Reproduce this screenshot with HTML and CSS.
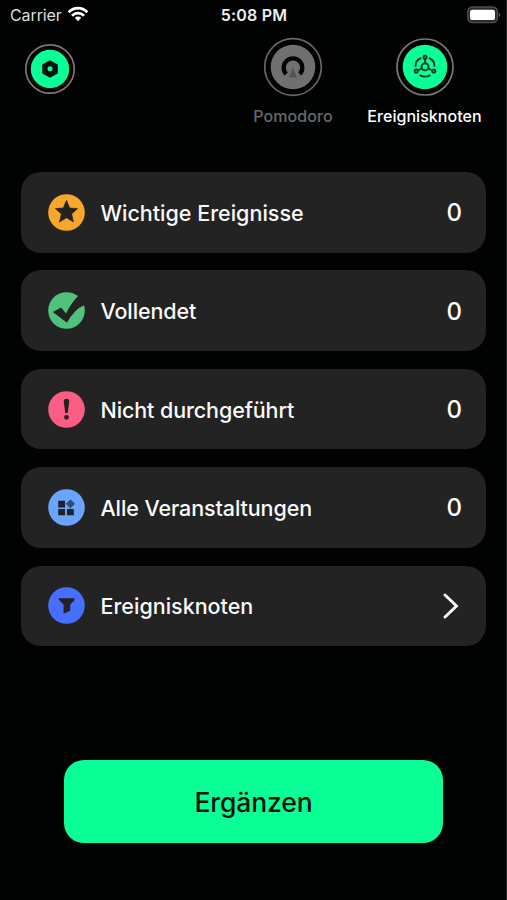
FILE: index.html
```html
<!DOCTYPE html>
<html lang="de">
<head>
<meta charset="utf-8">
<title>Ereignisknoten</title>
<link rel="stylesheet" href="styles.css">
</head>
<body>
<div class="screen">
  <div class="status">
    <div class="carrier"><span>Carrier</span>
      <svg width="22" height="16" viewBox="0 0 22 16" fill="none" stroke="#fff" stroke-width="2.7"><path d="M1.7 6.2C7 .8 15 .8 20.3 6.2"/><path d="M5 9.7c3.3-3.4 8.7-3.4 12 0"/><path d="M7.8 11.8 11 15.2l3.200-3.400c-1.800-1.800-4.600-1.800-6.400 0z" fill="#fff" stroke="none"/></svg>
    </div>
    <div class="clock">5:08 PM</div>
    <svg class="battery" width="34" height="18" viewBox="0 0 34 18"><rect x=".8" y="1" width="29.600" height="15.600" rx="4.500" fill="#2a2a2a" stroke="#505050" stroke-width="1.400"/><rect x="3" y="3.700" width="25" height="10.400" rx="2.200" fill="#fff"/><path d="M31.800 6.500c2 .8 2 3.800 0 4.600z" fill="#555"/></svg>
  </div>
  <div class="header">
    <svg class="settings" width="52" height="52" viewBox="-26 -26 52 52"><circle r="24.200" fill="none" stroke="#777" stroke-width="1.700"/><circle r="19.200" fill="#0aff97"/><path d="M0-8.800 7.800-4.400V4.400L0 8.800-7.800 4.400V-4.400z" fill="#04130c"/><circle r="2.500" cy="-.3" fill="#0aff97"/></svg>
    <div class="tab tab-off">
      <svg width="60" height="60" viewBox="-30 -30 60 60"><circle r="28.300" fill="none" stroke="#666" stroke-width="1.700"/><circle r="22.300" fill="#707070"/><path d="M-6.800 7A9.300 9.300 0 1 1 6.800 7" fill="none" stroke="#040404" stroke-width="4.300"/><path d="M0 .5 4 10.500H-4z" fill="#555"/></svg>
      <span>Pomodoro</span>
    </div>
    <div class="tab tab-on">
      <svg width="60" height="60" viewBox="-30 -30 60 60"><circle r="28" fill="none" stroke="#777" stroke-width="1.700"/><circle r="22.300" fill="#0aff97"/><g fill="none" stroke="#063c27" stroke-width="1.900"><circle r="3.500" cy="-.2"/><circle cy="-9.800" r="1.600"/><circle cx="-8.800" cy="4" r="1.600"/><circle cx="8.800" cy="4" r="1.600"/><path d="M0-8.200V-3.700M-3 1.500-7.400 3.400M3 1.500 7.400 3.400M-9.600-.2C-9.700-4.500-7.400-7.700-3.800-9M9.600-.2C9.700-4.500 7.400-7.700 3.800-9M-5.400 8.100Q0 11.200 5.400 8.100"/></g></svg>
      <span>Ereignisknoten</span>
    </div>
  </div>
  <div class="list">
    <div class="card">
      <svg class="icon" viewBox="0 0 38 38"><circle cx="19" cy="19" r="18.800" fill="#f8a72b"/><path d="M19 6.500 22.300 14.300 30.500 15 24.300 20.500 26.200 28.800 19 24.500 11.800 28.800 13.700 20.500 7.500 15 15.700 14.300z" fill="#222" stroke="#222" stroke-width=".6"/></svg>
      <span class="label wide">Wichtige Ereignisse</span><span class="count">0</span>
    </div>
    <div class="card">
      <svg class="icon" viewBox="0 0 38 38"><circle cx="19" cy="19" r="18.800" fill="#50c27b"/><path d="M5 20.500 13.500 16 18.500 22Q24 10.500 31.500 3.500L38 9V13Q27 17.500 19.500 31.500z" fill="#222"/></svg>
      <span class="label">Vollendet</span><span class="count">0</span>
    </div>
    <div class="card">
      <svg class="icon" viewBox="0 0 38 38"><circle cx="19" cy="19" r="18.800" fill="#fb5d84"/><path d="M16.200 10.800a2.800 2.800 0 0 1 5.600 0L20.300 22.500h-2.600z" fill="#222"/><circle cx="19" cy="27" r="2.400" fill="#222"/></svg>
      <span class="label">Nicht durchgeführt</span><span class="count">0</span>
    </div>
    <div class="card">
      <svg class="icon" viewBox="0 0 38 38"><circle cx="19" cy="19" r="18.800" fill="#6aa4fd"/><path d="M10.500 12h7v7h-7zM10.500 20.500h7v6.500h-7zM19.500 20.500h7v6.500h-7z" fill="#202227"/><path d="m23 10.500 4.700 4.700L23 19.900l-4.700-4.700z" fill="#2f4d7b"/></svg>
      <span class="label">Alle Veranstaltungen</span><span class="count">0</span>
    </div>
    <div class="card">
      <svg class="icon" viewBox="0 0 38 38"><circle cx="19" cy="19" r="18.800" fill="#466fff"/><path d="M11 11.500H27.500L26.800 14 22.800 18V24.500L16 27.500V18L11 13z" fill="#222"/></svg>
      <span class="label wide">Ereignisknoten</span>
      <svg class="chevron" width="18" height="28" viewBox="0 0 18 28"><path d="M3 3 14.500 14 3 25" fill="none" stroke="#fff" stroke-width="2.900" stroke-linecap="round"/></svg>
    </div>
  </div>
  <button class="add">Ergänzen</button>
</div>
</body>
</html>
```
FILE: styles.css
```css
* { box-sizing: border-box; }
body { margin: 0; background: #010302; color: #fff; font-family: Inter, "Liberation Sans", sans-serif; }
.screen { width: 507px; height: 900px; border-right: 1px solid #242625; display: flex; flex-direction: column; overflow: hidden; }
svg { display: block; flex: none; }
.status { height: 30px; display: grid; grid-template-columns: 1fr auto 1fr; align-items: center; padding: 0 5px 0 10px; }
.carrier { display: flex; align-items: center; gap: 5px; font-size: 16px; letter-spacing: -.1px; color: #ddd; }
.carrier svg { margin-top: -3px; }
.clock { font-size: 16px; font-weight: 600; letter-spacing: .2px; color: #eee; margin-right: 3px; }
.battery { justify-self: end; margin-top: -1px; }
.header { height: 142px; display: flex; padding: 7px 15px 0 24px; align-items: flex-start; }
.settings { margin: 6px auto 0 0; }
.tab { display: flex; flex-direction: column; align-items: center; gap: 9px; font-size: 16px; line-height: 20px; font-weight: 500; }
.tab span { white-space: nowrap; }
.tab-off { color: #686868; width: 98px; }
.tab-on { width: 132px; margin-left: 17px; }
.tab-off span { letter-spacing: .1px; }
.tab-on span { letter-spacing: .05px; margin-left: -1px; }
.list { display: flex; flex-direction: column; gap: 17.700px; padding: 0 20px 0 21.400px; }
.card { height: 80.700px; border-radius: 20px; background: #232323; display: flex; align-items: center; padding: 0 24px 0 26.200px; }
.icon { width: 37px; height: 37px; margin-right: 15.900px; }
.label { flex: 1; margin-top: 1px; font-size: 21.500px; font-weight: 500; line-height: 28px; letter-spacing: -.1px; white-space: nowrap; color: #fafafa; }
.wide { letter-spacing: 0; }
.count { margin-top: 1px; font-size: 24px; font-weight: 500; }
.chevron { margin: 0 2.500px 0 0; }
.add { width: 379px; height: 83px; margin: 114px 0 0 64px; border: 0; padding: 0; border-radius: 20px; background: #0aff97; color: #04140c; font: 500 26.500px Inter, "Liberation Sans", sans-serif; letter-spacing: -.1px; }
```
